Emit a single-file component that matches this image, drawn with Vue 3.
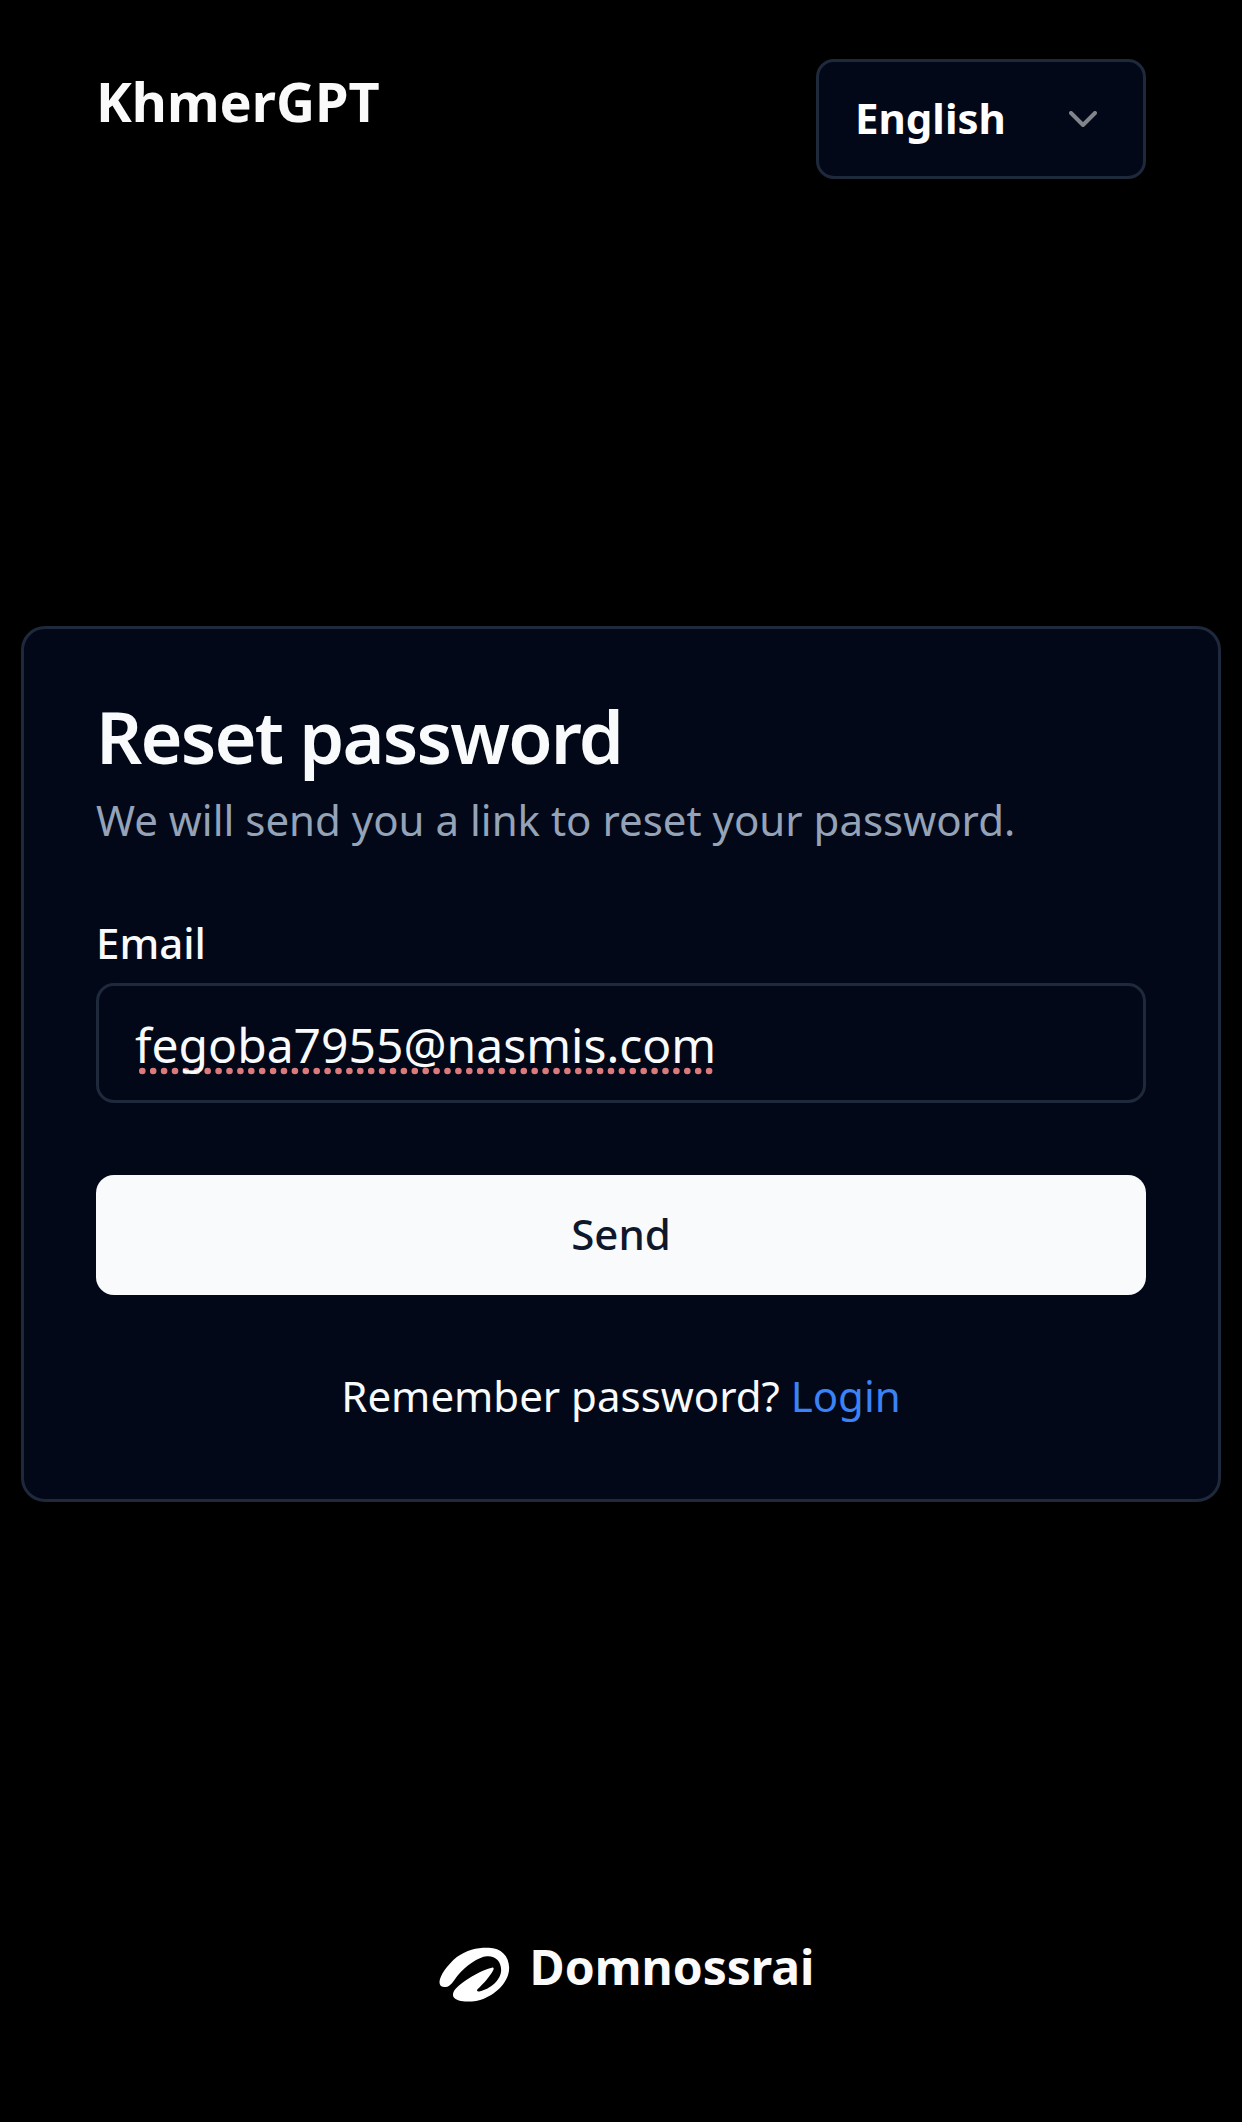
<script setup>
import { ref } from 'vue'

const language = ref('English')
const email = ref('fegoba7955@nasmis.com')
</script>

<template>
  <div class="page">
    <header class="header">
      <div class="brand">KhmerGPT</div>
      <button class="select" type="button">
        <span class="selected">{{ language }}</span>
        <svg class="chevron" viewBox="0 0 24 24" fill="none" stroke="currentColor" stroke-width="2" stroke-linecap="round" stroke-linejoin="round">
          <path d="m6 9 6 6 6-6" />
        </svg>
      </button>
    </header>

    <main class="card">
      <h1 class="title">Reset password</h1>
      <p class="description">We will send you a link to reset your password.</p>
      <div class="label">Email</div>
      <div class="input">
        <div class="value">
          <svg class="spelling" width="580" height="8" viewBox="0 0 580 8">
            <line x1="7.3" y1="4" x2="575" y2="4" stroke="#dc7a7b" stroke-width="6.6" stroke-linecap="round" stroke-dasharray="0 10.9" />
          </svg>
          <span class="text">{{ email }}</span>
        </div>
      </div>
      <button class="send" type="button">Send</button>
      <p class="hint">Remember password? <a class="login">Login</a></p>
    </main>

    <footer class="footer">
      <svg class="logo" viewBox="54 82 212 168">
        <path fill="#fff" d="M55 186C56 168 78 136 107 112C138 89 171 83 203 84C239 85 264 108 264 145C264 184 228 221 188 237C159 249 108 250 97 232C92 219 101 207 119 193C144 173 184 150 212 144C218 142 219 147 216 152C208 169 186 193 169 209C165 214 169 217 177 215C207 208 239 182 240 152C240 125 222 108 197 110C172 112 134 138 109 168C96 184 90 200 73 202C61 202 55 198 55 186Z" />
      </svg>
      <span class="company">Domnossrai</span>
    </footer>
  </div>
</template>

<style>
body {
  margin: 0;
  background: #000;
}
</style>

<style scoped>
.page {
  box-sizing: border-box;
  width: 1242px;
  height: 2122px;
  padding: 59px 21px 0;
  display: flex;
  flex-direction: column;
  background: #000;
  color: #f8fafc;
  font-family: "Noto Sans", sans-serif;
  font-size: 42px;
  line-height: 60px;
  overflow: hidden;
}

.header {
  display: flex;
  justify-content: space-between;
  align-items: flex-start;
  padding: 0 75px;
  height: 120px;
}

.brand {
  font-size: 54px;
  line-height: 84px;
  font-weight: 700;
  color: #fafafa;
}

.select {
  box-sizing: border-box;
  display: flex;
  align-items: center;
  justify-content: space-between;
  width: 330px;
  height: 120px;
  padding: 0 36px;
  border: 3px solid #1e293b;
  border-radius: 18px;
  background: #020817;
  color: #fff;
  font: 700 42px/60px "Noto Sans", sans-serif;
}

.selected {
  margin-bottom: 2px;
}

.chevron {
  width: 48px;
  height: 48px;
  opacity: 0.5;
}

.card {
  box-sizing: border-box;
  display: flex;
  flex-direction: column;
  margin-top: 447px;
  height: 876px;
  padding: 71px 72px 72px;
  border: 3px solid #1e293b;
  border-radius: 24px;
  background: #020817;
}

.title {
  margin: 0 0 18px;
  font-size: 72px;
  line-height: 72px;
  font-weight: 600;
  letter-spacing: -1.8px;
}

.description {
  margin: 0 0 72px;
  color: #94a3b8;
}

.label {
  margin-bottom: 19px;
  line-height: 42px;
  font-weight: 500;
}

.input {
  box-sizing: border-box;
  display: flex;
  align-items: center;
  height: 120px;
  padding: 4px 36px 0;
  border: 3px solid #1e293b;
  border-radius: 18px;
  font-size: 48px;
  line-height: 72px;
}

.value {
  position: relative;
}

.spelling {
  position: absolute;
  left: 0;
  top: 58px;
}

.text {
  position: relative;
}

.send {
  height: 120px;
  margin: 72px 0 71px;
  padding: 0 0 2px;
  border: 0;
  border-radius: 18px;
  background: #f8fafc;
  color: #0f172a;
  font: 500 42px/60px "Noto Sans", sans-serif;
}

.hint {
  margin: 0;
  text-align: center;
}

.login {
  color: #3b82f6;
}

.footer {
  display: flex;
  justify-content: center;
  align-items: flex-start;
  gap: 20px;
  margin-top: 429px;
  padding-left: 11px;
}

.logo {
  width: 71px;
  height: 56px;
  margin-top: 16px;
}

.company {
  font-size: 48px;
  line-height: 72px;
  font-weight: 700;
  color: #fafafa;
}
</style>
